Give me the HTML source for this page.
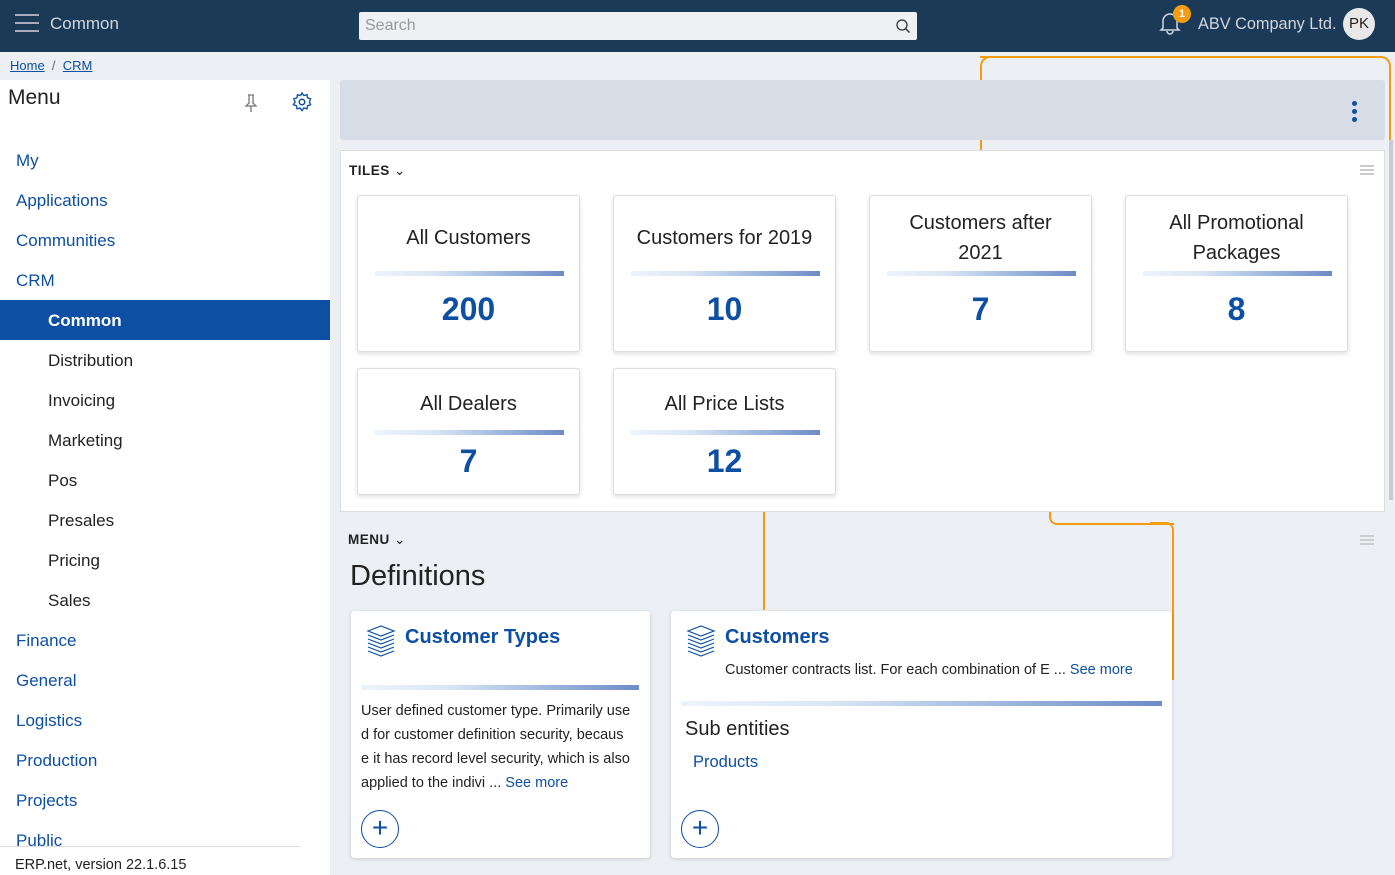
<!DOCTYPE html>
<html><head><meta charset="utf-8"><style>
*{box-sizing:border-box;margin:0;padding:0}
body{width:1395px;height:875px;overflow:hidden;background:#eceff4;font-family:"Liberation Sans",sans-serif;color:#222;position:relative}
.a{position:absolute}
.top{left:0;top:0;width:1395px;height:52px;background:#1b3a57}
.side{left:0;top:80px;width:330px;height:795px;background:#fff}
.mi{position:absolute;left:16px;font-size:17px;color:#0d4fa3}
.si{position:absolute;left:48px;font-size:17px;color:#222}
.tile{position:absolute;width:223px;background:#fff;border:1px solid #ddd;border-radius:3px;box-shadow:0 2px 5px rgba(0,0,0,.12);text-align:center}
.tile .t{font-size:20px;color:#222;line-height:30px}
.bar{position:absolute;height:5px;background:linear-gradient(90deg,#edf3fb 0%,#dbe7f6 30%,#a9c0e2 60%,#6d8cc6 100%)}
.tile .n{font-size:32px;font-weight:bold;color:#0d4fa3}
.card{position:absolute;background:#fff;border-radius:4px;box-shadow:0 1px 4px rgba(0,0,0,.15)}
.plus{position:absolute;width:38px;height:38px;border:1.5px solid #0d4fa3;border-radius:50%;color:#0d4fa3;font-size:28px;line-height:33px;text-align:center}
.ct{position:absolute;font-size:20px;font-weight:bold;color:#0d4fa3}
.p{font-size:14.5px;line-height:24px;color:#222}
.lk{color:#0d4fa3}
</style></head><body>
<div class="a top">
 <div class="a" style="left:15px;top:14px;width:24px;height:2px;background:#aab;box-shadow:0 8px 0 #aab,0 16px 0 #aab"></div>
 <div class="a" style="left:50px;top:14px;font-size:17px;color:#d0d6de">Common</div>
 <div class="a" style="left:359px;top:12px;width:558px;height:28px;background:#eef0f3;border-radius:2px"><span class="a" style="left:6px;top:5px;font-size:16px;color:#999">Search</span>
 <svg class="a" style="right:6px;top:6px" width="16" height="16" viewBox="0 0 16 16"><circle cx="7" cy="7" r="5" fill="none" stroke="#333" stroke-width="1.3"/><path d="M10.5 10.5l4 4" stroke="#333" stroke-width="1.4"/></svg></div>
 <svg class="a" style="left:1158px;top:10px" width="24" height="26" viewBox="0 0 24 26"><path d="M5 18V11a7 7 0 0 1 14 0v7l2 2H3z M9 21a3 3 0 0 0 6 0" fill="none" stroke="#d0d6de" stroke-width="1.5"/></svg>
 <div class="a" style="left:1173px;top:5px;width:18px;height:18px;border-radius:50%;background:#f39c12;color:#fff;font-size:11px;font-weight:bold;text-align:center;line-height:18px">1</div>
 <div class="a" style="left:1198px;top:15px;font-size:16.3px;color:#d0d6de">ABV Company Ltd.</div>
 <div class="a" style="left:1343px;top:8px;width:32px;height:32px;border-radius:50%;background:#e8e8e8;font-size:15px;text-align:center;line-height:32px;color:#222">PK</div>
</div>
<div class="a" style="left:10px;top:58px;font-size:13px"><u class="lk">Home</u> <span style="color:#666">&nbsp;/&nbsp;</span> <u class="lk">CRM</u></div>
<div class="a side">
 <div class="a" style="left:8px;top:6px;font-size:21px;color:#222">Menu</div>
 <svg class="a" style="left:244px;top:13px" width="14" height="20" viewBox="0 0 14 20"><path d="M4 2h6M5 2v8l-3 3h10l-3-3V2M7 13v6" fill="none" stroke="#777" stroke-width="1.3"/></svg>
 <svg class="a" style="left:291px;top:11px" width="22" height="22" viewBox="0 0 24 24"><circle cx="12" cy="12" r="3" fill="none" stroke="#0d4fa3" stroke-width="1.6"/><path d="M12 2l2 3 3.5-1 .5 3.5 3.5 1-1.5 3.5 1.5 3-3.5 1-.5 3.5-3.5-1-2 3-2-3-3.5 1-.5-3.5-3.5-1L4.5 12 3 8.5l3.5-1L7 4l3.5 1z" fill="none" stroke="#0d4fa3" stroke-width="1.5" stroke-linejoin="round"/></svg>
 <div class="mi" style="top:71px">My</div>
 <div class="mi" style="top:111px">Applications</div>
 <div class="mi" style="top:151px">Communities</div>
 <div class="mi" style="top:191px">CRM</div>
 <div class="a" style="left:0;top:220px;width:330px;height:40px;background:#0d4fa3"></div>
 <div class="si" style="top:231px;color:#fff;font-weight:bold">Common</div>
 <div class="si" style="top:271px">Distribution</div>
 <div class="si" style="top:311px">Invoicing</div>
 <div class="si" style="top:351px">Marketing</div>
 <div class="si" style="top:391px">Pos</div>
 <div class="si" style="top:431px">Presales</div>
 <div class="si" style="top:471px">Pricing</div>
 <div class="si" style="top:511px">Sales</div>
 <div class="mi" style="top:551px">Finance</div>
 <div class="mi" style="top:591px">General</div>
 <div class="mi" style="top:631px">Logistics</div>
 <div class="mi" style="top:671px">Production</div>
 <div class="mi" style="top:711px">Projects</div>
 <div class="mi" style="top:751px">Public</div>
 <div class="a" style="left:0;top:766px;height:29px;background:#fff;border-top:1px solid #ddd;width:300px"></div>
 <div class="a" style="left:15px;top:777px;font-size:14.5px">ERP.net, version 22.1.6.15</div>
</div>
<!-- orange lines -->
<div class="a" style="left:980px;top:56px;width:411px;height:409px;border:2px solid #f39c12;border-bottom:none;border-left:none;border-radius:0 10px 0 0"></div>
<div class="a" style="left:980px;top:56px;width:12px;height:94px;border-left:2px solid #f39c12;border-top:2px solid #f39c12;border-radius:10px 0 0 0"></div>
<div class="a" style="left:1386px;top:440px;width:5px;height:25px;border-right:2px solid #f39c12"></div>
<div class="a" style="left:1049px;top:505px;width:125px;height:20px;border-left:2px solid #f39c12;border-bottom:2px solid #f39c12;border-radius:0 0 0 8px"></div>
<div class="a" style="left:1150px;top:522px;width:24px;height:158px;border-top:2px solid #f39c12;border-right:2px solid #f39c12;border-radius:0 8px 0 0"></div>
<div class="a" style="left:763px;top:510px;width:2px;height:100px;background:#f39c12"></div>
<div class="a" style="left:1389px;top:140px;width:4px;height:360px;background:#c8ccd2"></div>
<div class="a" style="left:340px;top:80px;width:1045px;height:60px;background:#d6dde7;border-radius:3px"></div>
<div class="a" style="left:1352px;top:101px;width:5px;height:5px;border-radius:50%;background:#0d4fa3;box-shadow:0 8px 0 #0d4fa3,0 16px 0 #0d4fa3"></div>
<div class="a" style="left:340px;top:150px;width:1045px;height:362px;background:#fff;border:1px solid #ddd"></div>
<div class="a" style="left:349px;top:163px;font-size:13.5px;font-weight:bold;letter-spacing:.5px">TILES <span style="font-weight:normal">&#8964;</span></div>
<div class="a" style="left:1360px;top:165px;width:14px;height:1.5px;background:#ccc;box-shadow:0 4px 0 #ccc,0 8px 0 #ccc"></div>
<div class="tile" style="left:357px;top:195px;height:157px"><div class="t" style="margin-top:27px">All Customers</div><div class="bar" style="left:17px;top:75px;width:189px"></div><div class="n" style="margin-top:38px">200</div></div>
<div class="tile" style="left:613px;top:195px;height:157px"><div class="t" style="margin-top:27px">Customers for 2019</div><div class="bar" style="left:17px;top:75px;width:189px"></div><div class="n" style="margin-top:38px">10</div></div>
<div class="tile" style="left:869px;top:195px;height:157px"><div class="t" style="margin-top:12px">Customers after<br>2021</div><div class="bar" style="left:17px;top:75px;width:189px"></div><div class="n" style="margin-top:23px">7</div></div>
<div class="tile" style="left:1125px;top:195px;height:157px"><div class="t" style="margin-top:12px">All Promotional<br>Packages</div><div class="bar" style="left:17px;top:75px;width:189px"></div><div class="n" style="margin-top:23px">8</div></div>
<div class="tile" style="left:357px;top:368px;height:127px"><div class="t" style="margin-top:20px">All Dealers</div><div class="bar" style="left:17px;top:61px;width:189px"></div><div class="n" style="margin-top:24px">7</div></div>
<div class="tile" style="left:613px;top:368px;height:127px"><div class="t" style="margin-top:20px">All Price Lists</div><div class="bar" style="left:17px;top:61px;width:189px"></div><div class="n" style="margin-top:24px">12</div></div>
<div class="a" style="left:348px;top:532px;font-size:13.5px;font-weight:bold;letter-spacing:.5px">MENU <span style="font-weight:normal">&#8964;</span></div>
<div class="a" style="left:1360px;top:535px;width:14px;height:1.5px;background:#ccc;box-shadow:0 4px 0 #ccc,0 8px 0 #ccc"></div>
<div class="a" style="left:350px;top:560px;font-size:29px">Definitions</div>
<div class="card" style="left:351px;top:611px;width:299px;height:247px">
 <svg class="a" style="left:15px;top:14px" width="30" height="32" viewBox="0 0 30 32"><g fill="none" stroke="#0d4fa3" stroke-width="1.2"><path d="M2 6l13-5 13 5-13 5z"/><path d="M2 10l13 5 13-5M2 14l13 5 13-5M2 18l13 5 13-5M2 22l13 5 13-5M2 26l13 5 13-5"/></g></svg>
 <div class="ct" style="left:54px;top:15px">Customer Types</div>
 <div class="bar" style="left:10px;top:74px;width:278px"></div>
 <div class="a p" style="left:10px;top:88px;width:280px">User defined customer type. Primarily use<br>d for customer definition security, becaus<br>e it has record level security, which is also<br>applied to the indivi ... <span class="lk">See more</span></div>
 <div class="plus" style="left:10px;top:199px">+</div>
</div>
<div class="card" style="left:671px;top:611px;width:501px;height:247px">
 <svg class="a" style="left:15px;top:14px" width="30" height="32" viewBox="0 0 30 32"><g fill="none" stroke="#0d4fa3" stroke-width="1.2"><path d="M2 6l13-5 13 5-13 5z"/><path d="M2 10l13 5 13-5M2 14l13 5 13-5M2 18l13 5 13-5M2 22l13 5 13-5M2 26l13 5 13-5"/></g></svg>
 <div class="ct" style="left:54px;top:15px">Customers</div>
 <div class="a p" style="left:54px;top:47px">Customer contracts list. For each combination of E ... <span class="lk">See more</span></div>
 <div class="bar" style="left:10px;top:90px;width:481px"></div>
 <div class="a" style="left:14px;top:107px;font-size:20px">Sub entities</div>
 <div class="a" style="left:22px;top:142px;font-size:16.5px;color:#0d4fa3">Products</div>
 <div class="plus" style="left:10px;top:199px">+</div>
</div>
</body></html>
